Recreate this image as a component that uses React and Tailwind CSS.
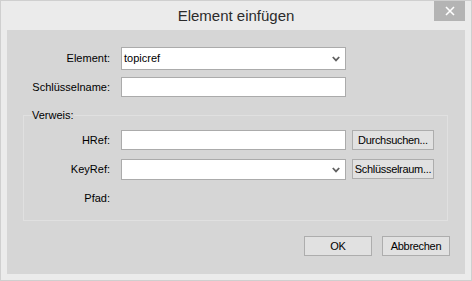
const font = { fontFamily: '"Liberation Sans", Arial, sans-serif' };

const Chevron = () => (
  <svg width="8" height="6" viewBox="0 0 8 6" className="shrink-0">
    <polyline points="0.8,1 4,4.4 7.2,1" fill="none" stroke="#606060" strokeWidth="1.8" />
  </svg>
);

const Label = ({ w, children }) => (
  <div className={`${w} text-right text-[11px] text-black leading-none`}>{children}</div>
);

const TextBox = ({ h = 'h-[20px]', children }) => (
  <div className={`ml-[11px] w-[225px] ${h} bg-white border border-[#ababab] flex items-center px-[2px] text-[11px] text-black`}>
    {children}
  </div>
);

const Combo = ({ h = 'h-[21px]', value }) => (
  <div className={`ml-[11px] w-[225px] ${h} bg-white border border-[#ababab] flex items-center justify-between pl-[2px] pr-[5px] text-[11px] text-black`}>
    <span>{value}</span>
    <Chevron />
  </div>
);

const Button = ({ w, className = '', children }) => (
  <button className={`${w} h-[20px] bg-[#e1e1e1] border border-[#adadad] px-0 text-[11px] tracking-[-0.3px] text-black leading-none flex items-center justify-center whitespace-nowrap ${className}`}>
    {children}
  </button>
);

export default function App() {
  return (
    <div style={font} className="w-[472px] h-[281px] bg-[#ebebeb] border border-[#cfcfcf] flex flex-col">
      <div className="relative h-[29px] shrink-0 flex items-center justify-center">
        <span className="text-[15px] text-[#2b2b2b] pt-[1px]">Element einfügen</span>
        <div className="absolute right-[6px] top-[0px] w-[31px] h-[20px] bg-[#b4b4b4] flex items-center justify-center">
          <svg width="10" height="10" viewBox="0 0 10 10">
            <path d="M1 1 L9 9 M9 1 L1 9" stroke="#ffffff" strokeWidth="1.6" />
          </svg>
        </div>
      </div>

      <div className="mx-[6px] h-[244px] bg-[#d6d6d6] flex flex-col pt-[17px]">
        <div className="flex items-center">
          <Label w="w-[103px]">Element:</Label>
          <Combo h="h-[23px]" value="topicref" />
        </div>
        <div className="flex items-center mt-[7px]">
          <Label w="w-[103px]">Schlüsselname:</Label>
          <TextBox />
        </div>

        <fieldset className="mt-[12px] ml-[16px] w-[425px] h-[112px] border border-[#e0e0e0] px-0 pb-0">
          <legend className="ml-[8px] px-0 text-[11px] text-black leading-[13px]">Verweis:</legend>
          <div className="flex items-center mt-[8px]">
            <Label w="w-[86px]">HRef:</Label>
            <TextBox />
            <Button w="w-[82px]" className="ml-[6px]">Durchsuchen...</Button>
          </div>
          <div className="flex items-center mt-[9px]">
            <Label w="w-[86px]">KeyRef:</Label>
            <Combo />
            <Button w="w-[82px]" className="ml-[6px] mt-[-1px]">Schlüsselraum...</Button>
          </div>
          <div className="flex items-center mt-[13px]">
            <Label w="w-[86px]">Pfad:</Label>
          </div>
        </fieldset>

        <div className="flex justify-end gap-[10px] mt-[15px] pr-[15px]">
          <Button w="w-[68px]">OK</Button>
          <Button w="w-[68px]">Abbrechen</Button>
        </div>
      </div>
    </div>
  );
}
